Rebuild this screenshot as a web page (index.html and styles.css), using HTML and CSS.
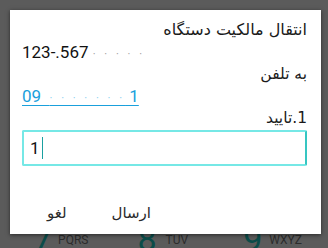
FILE: index.html
```html
<!DOCTYPE html>
<html lang="fa">
<head>
<meta charset="utf-8">
<link rel="stylesheet" href="styles.css">
</head>
<body>
<div class="keypad">
  <div class="key key-7"><span class="digit">7</span><span class="letters">PQRS</span></div>
  <div class="key key-8"><span class="digit">8</span><span class="letters">TUV</span></div>
  <div class="key key-9"><span class="digit">9</span><span class="letters">WXYZ</span></div>
</div>
<div class="dialog">
  <div class="line rtl title">انتقال مالکیت دستگاه</div>
  <div class="line ltr serial">123-.567 <span class="dots">· · · · ·</span></div>
  <div class="line rtl">به تلفن</div>
  <div class="line ltr"><a class="phone" href="#">09&nbsp;&nbsp;<span class="dots">· · · · · · ·</span>&nbsp;1</a></div>
  <div class="line rtl">1.تاييد</div>
  <div class="input"><span class="value">1</span><span class="caret"></span></div>
  <div class="actions">
    <span class="btn">لغو</span>
    <span class="btn">ارسال</span>
  </div>
</div>
</body>
</html>
```
FILE: styles.css
```css
html, body {
  margin: 0;
  padding: 0;
  width: 328px;
  height: 248px;
  overflow: hidden;
  background: #5b5b5b;
  font-family: "DejaVu Sans", Roboto, sans-serif;
}
.keypad {
  position: absolute;
  left: 0;
  top: 222px;
  width: 328px;
  display: flex;
  align-items: flex-start;
}
.key {
  display: flex;
  align-items: flex-start;
  gap: 9px;
}
.digit {
  font-family: Roboto, sans-serif;
  font-weight: 400;
  font-size: 34px;
  line-height: 34px;
  color: #0b4c49;
}
.letters {
  font-family: Roboto, sans-serif;
  font-size: 12px;
  color: #2c2c2c;
  line-height: 12px;
  margin-top: 12px;
}
.key-7 { margin-left: 33px; gap: 6px; }
.key-8 { margin-left: 49px; gap: 9px; }
.key-9 { margin-left: 55px; gap: 7px; }
.dialog {
  position: absolute;
  left: 10px;
  top: 10px;
  width: 311px;
  height: 224px;
  background: #fff;
  box-shadow: 0 1px 4px rgba(0,0,0,0.55);
  box-sizing: border-box;
  padding: 9px 14px 0 12px;
  display: flex;
  flex-direction: column;
}
.line {
  height: 22px;
  font-size: 15.5px;
  line-height: 22px;
  color: #1a1a1a;
  white-space: nowrap;
}
.title { font-size: 16px; }
.rtl { direction: rtl; text-align: right; }
.ltr { direction: ltr; text-align: left; font-family: Roboto, sans-serif; font-size: 17px; }
.serial { color: #111; }
.dots { letter-spacing: 3px; color: #999; font-size: 11px; line-height: 0; }
.phone {
  color: #1aa0dc;
  text-decoration: underline;
  text-underline-offset: 3px;
}
.phone .dots { color: #7fcdef; letter-spacing: 3px; }
.input {
  margin-top: 1px;
  height: 36px;
  border: 2px solid #76e8e6;
  border-right-color: #36c6c2;
  border-radius: 2px;
  box-sizing: border-box;
  display: flex;
  align-items: center;
  padding-left: 6px;
  font-family: Roboto, sans-serif;
  font-size: 17px;
  color: #111;
}
.caret {
  width: 1.5px;
  height: 22px;
  background: #1aa0a0;
  margin-left: 2px;
}
.actions {
  display: flex;
  gap: 45px;
  padding-left: 25px;
  margin-top: 38px;
  font-size: 15px;
  line-height: 18px;
  color: #2a2a2a;
}
```
